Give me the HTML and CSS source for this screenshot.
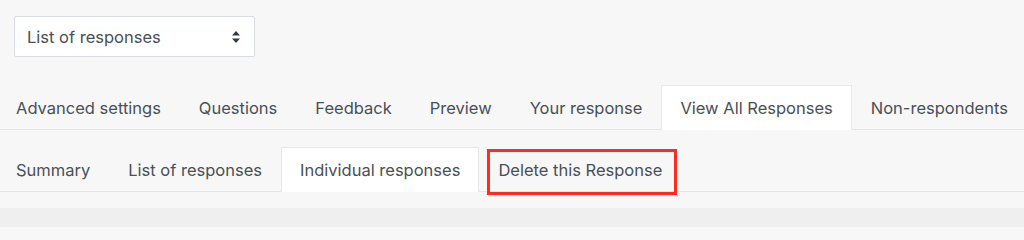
FILE: index.html
```html
<!DOCTYPE html>
<html lang="en">
<head>
<meta charset="utf-8">
<title>Responses</title>
<link rel="stylesheet" href="styles.css">
</head>
<body>
<div class="page">
  <div class="select-row">
    <div class="select">
      <span class="select-label">List of responses</span>
      <svg class="select-arrow" width="8" height="12" viewBox="0 0 8 12" aria-hidden="true">
        <path d="M4 0 L8 4.5 L0 4.5 Z M0 7.5 L8 7.5 L4 12 Z" fill="#343a40"/>
      </svg>
    </div>
  </div>

  <ul class="tabs tabs-primary">
    <li class="tab">Advanced settings</li>
    <li class="tab">Questions</li>
    <li class="tab">Feedback</li>
    <li class="tab">Preview</li>
    <li class="tab">Your response</li>
    <li class="tab active">View All Responses</li>
    <li class="tab">Non-respondents</li>
  </ul>

  <ul class="tabs tabs-secondary">
    <li class="tab">Summary</li>
    <li class="tab">List of responses</li>
    <li class="tab active">Individual responses</li>
    <li class="tab highlighted">Delete this Response<span class="highlight-box"></span></li>
  </ul>

  <div class="content-band"></div>
</div>
</body>
</html>
```

FILE: styles.css
```css
html, body {
  margin: 0;
  padding: 0;
}

body {
  background: #f7f7f7;
  font-family: "Inter", "Liberation Sans", sans-serif;
  color: #495057;
  width: 1024px;
  height: 227px;
  overflow: hidden;
}

.page {
  display: flex;
  flex-direction: column;
  height: 227px;
}

.select-row {
  padding: 16px 0 0 14px;
}

.select {
  box-sizing: border-box;
  width: 241px;
  height: 41px;
  background: #fff;
  border: 1px solid #d9dde1;
  border-radius: 2px;
  display: flex;
  align-items: center;
  justify-content: space-between;
  padding: 0 14px 0 12px;
  font-size: 16.5px;
}

.select-arrow {
  display: block;
}

.tabs {
  list-style: none;
  margin: 0;
  padding: 0;
  display: flex;
  border-bottom: 1px solid #e3e5e8;
  margin-left: -3px;
  height: 44px;
}

.tabs-primary {
  margin-top: 28px;
}

.tabs-secondary {
  margin-top: 17px;
}

.tab {
  box-sizing: border-box;
  height: 45px;
  margin-bottom: -1px;
  border: 1px solid transparent;
  padding: 0 18px;
  display: flex;
  align-items: center;
  font-size: 16.5px;
  white-space: nowrap;
  position: relative;
}

.tab.active {
  background: #fff;
  border-color: #e6e8ea #e6e8ea #fff;
}

.highlight-box {
  position: absolute;
  left: 7px;
  right: 3px;
  top: 1px;
  bottom: -4px;
  border: 3px solid #ff2b22;
  pointer-events: none;
}

.content-band {
  margin-top: 16px;
  flex: 1;
  background: #efefef;
}
```
